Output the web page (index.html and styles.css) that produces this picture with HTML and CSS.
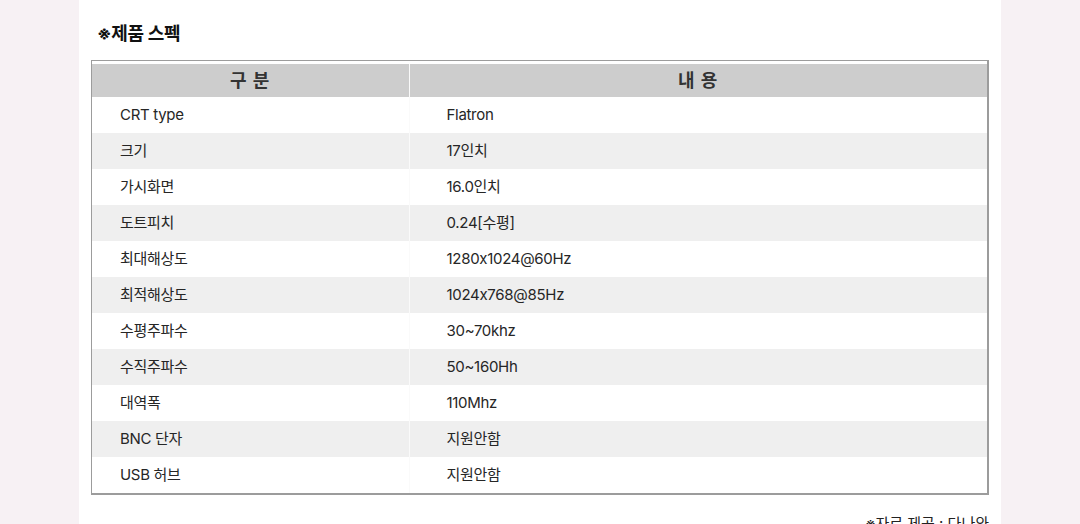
FILE: index.html
```html
<!DOCTYPE html>
<html lang="ko">
<head>
<meta charset="utf-8">
<title>제품 스펙</title>
<link rel="stylesheet" href="styles.css">
</head>
<body>
<div class="page">
  <h2 class="title">※제품 스펙</h2>
  <div class="spec-box">
    <table class="spec">
      <colgroup><col class="col1"><col class="col2"></colgroup>
      <thead>
        <tr><th class="c1">구 분</th><th class="c2">내 용</th></tr>
      </thead>
      <tbody>
        <tr><td class="c1">CRT type</td><td class="c2">Flatron</td></tr>
        <tr class="alt"><td class="c1">크기</td><td class="c2">17인치</td></tr>
        <tr><td class="c1">가시화면</td><td class="c2">16.0인치</td></tr>
        <tr class="alt"><td class="c1">도트피치</td><td class="c2">0.24[수평]</td></tr>
        <tr><td class="c1">최대해상도</td><td class="c2">1280x1024@60Hz</td></tr>
        <tr class="alt"><td class="c1">최적해상도</td><td class="c2">1024x768@85Hz</td></tr>
        <tr><td class="c1">수평주파수</td><td class="c2">30~70khz</td></tr>
        <tr class="alt"><td class="c1">수직주파수</td><td class="c2">50~160Hh</td></tr>
        <tr><td class="c1">대역폭</td><td class="c2">110Mhz</td></tr>
        <tr class="alt"><td class="c1">BNC 단자</td><td class="c2">지원안함</td></tr>
        <tr><td class="c1">USB 허브</td><td class="c2">지원안함</td></tr>
      </tbody>
    </table>
  </div>
  <p class="source">※자료 제공 : 다나와</p>
</div>
</body>
</html>
```

FILE: styles.css
```css
html, body {
  margin: 0;
  padding: 0;
}
body {
  background: #f7f1f4;
  font-family: Inter, "Noto Sans CJK KR", sans-serif;
  color: #222;
  height: 524px;
  overflow: hidden;
}
.page {
  width: 922px;
  margin-left: 79px;
  background: #fff;
  padding: 22px 12px 0 12px;
  box-sizing: border-box;
  min-height: 560px;
}
.title {
  margin: 0 0 15px 6px;
  font-size: 18px;
  font-weight: 700;
  line-height: 23px;
  color: #111;
  letter-spacing: -0.3px;
}
.spec-box {
  border: 1px solid #9c9c9c;
  border-right-width: 2px;
  border-bottom-width: 2px;
  padding-top: 3px;
  background: #fff;
}
.spec {
  width: 100%;
  border-collapse: collapse;
  table-layout: fixed;
  font-size: 15px;
}
.col1 {
  width: 317px;
}
.spec th,
.spec td {
  box-sizing: border-box;
}
.spec th {
  background: #cdcdcd;
  height: 33px;
  padding: 0;
  font-size: 18px;
  font-weight: 700;
  color: #333;
  letter-spacing: 1px;
  text-align: center;
  line-height: 33px;
}
.spec td {
  height: 36px;
  padding: 0 0 0 28px;
  line-height: 36px;
  text-align: left;
  letter-spacing: -0.3px;
  color: #262626;
}
.spec td.c2 {
  padding-left: 37px;
}
.spec .c2 {
  border-left: 1px solid #fafafa;
}
.spec tr.alt td {
  background: #efefef;
}
.source {
  margin: 19px 0 0 0;
  text-align: right;
  font-size: 15px;
  color: #222;
  line-height: 20px;
}
```
